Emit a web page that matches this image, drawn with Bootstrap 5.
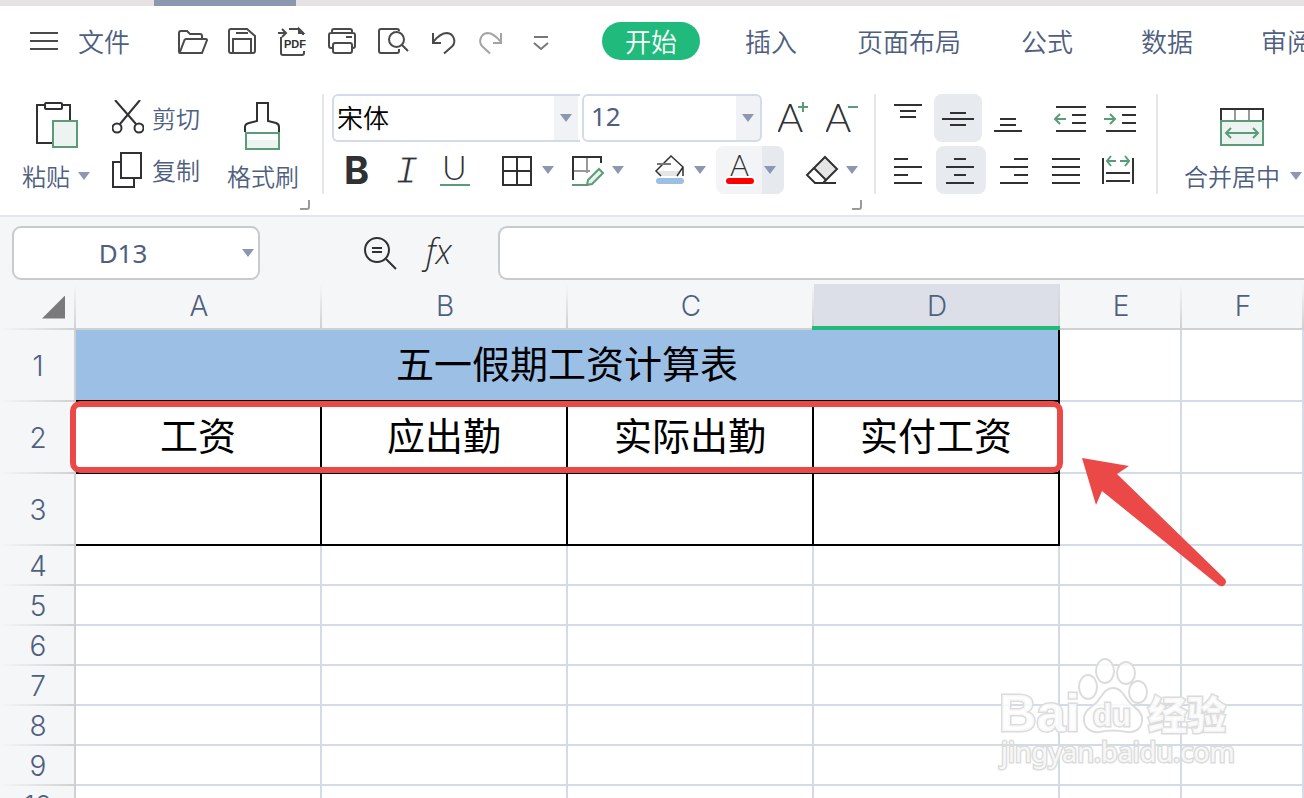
<!DOCTYPE html>
<html lang="zh-CN">
<head>
<meta charset="utf-8">
<meta name="viewport" content="width=device-width, initial-scale=1">
<title>工资计算表</title>
<link href="https://cdn.jsdelivr.net/npm/bootstrap@5.3.0/dist/css/bootstrap.min.css" rel="stylesheet">
<style>
:root{--ink:#4f5f7f;--caret:#8c98b3;--pane:#f5f6f8;--grid:#d3dbe8;--edge:#cfd0d1;--go:#20bb7c;--leaf:#5a9c77;--mark:#eb4848}
body{font-family:"Noto Sans","Noto Sans CJK SC",sans-serif;color:var(--ink);background:#fff}
svg{display:block;flex:none;fill:none;stroke:#303133;stroke-width:2}
svg .leaf{stroke:var(--leaf)}
svg text{stroke:none;fill:#303133}
.cjk{font-family:"Noto Sans CJK SC",sans-serif;font-weight:350}
button.plain{background:none;border:0;padding:0;color:inherit}
.strip{height:6px;background:#e6e2e4;padding-left:154px}
.strip-tab{width:142px;background:#8c98b0}
.menubar{height:72px;padding-left:30px;padding-bottom:2px}
.menubar>*{flex-shrink:0}
.menubar svg{stroke:#4a4a4a}
.menubar .nav-link{font-size:26px;line-height:38px;padding:0 23px;color:var(--ink);white-space:nowrap}
.menubar .nav-link.active{background:var(--go);color:#fff;border-radius:19px;margin-right:8px}
.menubar .nav{gap:14px;margin-left:34px}
.file-btn{font-size:26px;line-height:38px;margin-left:20px;margin-right:38px!important}
button.quick{width:50px;display:flex;justify-content:center;padding-top:2px}
.ribbon{padding:16px 0 21px;border-bottom:2px solid #e5e6ec;font-size:24px}
.group-box{height:100px;position:relative}
.rule{width:2px;height:100px;background:#e5e6e8;flex:none}
.tall{height:100px;display:flex;flex-direction:column;justify-content:space-between}
.tall span,.wide span{line-height:36px;white-space:nowrap}
.wide{height:48px;display:flex;align-items:center;gap:8px}
.caret{width:0;height:0;border:6px solid transparent;border-top:8px solid var(--caret);border-bottom:0;flex:none}
.launch{position:absolute;right:12px;bottom:-16px}
.launch svg{stroke:#9a9a9a}
.combo{height:48px;border:2px solid var(--grid);border-radius:6px;padding:0 26px 4px 7px;font-size:26px;color:var(--ink);background:linear-gradient(#f1f2f5,#f1f2f5) right/24px 100% no-repeat #fff;appearance:none;width:100%}
.combo-face{border-right:0;border-radius:6px 0 0 6px;color:#000;padding:0 26px 3px 3px;background-position:right 2px top}
.combo-wrap{position:relative}
.combo-wrap .caret{position:absolute;right:8px;top:20px;pointer-events:none}
.split{height:48px;width:68px;display:flex;align-items:center}
.split button+button{height:48px;width:22px;padding-left:2px!important}
.split-on{background:#f2f4f6;border-radius:8px;overflow:hidden}
.split-on button+button{background:#e6eaef}
.on{background:#e7eaef!important;border-radius:8px}
.formula{background:var(--pane);padding:9px 0 4px 12px}
.name-box{width:248px;height:54px;border:2px solid #c9cacb;border-radius:9px;background:#fff}
.name-box input{width:218px;border:0;background:none;text-align:center;font-size:26px;color:var(--ink);outline:0}
.formula-input{height:54px;border:2px solid #c9cacb;border-right:0;border-radius:9px 0 0 9px;background:#fff;min-width:0}
.sheet{position:relative;overflow:hidden}
.grid{table-layout:fixed;border-collapse:separate;border-spacing:0;width:100%}
.grid th{background-color:var(--pane);font:350 28px/1 Inter,sans-serif;color:var(--ink);text-align:center;padding:0}
.grid thead th{height:46px;border-bottom:2px solid var(--edge);background-image:linear-gradient(rgba(207,208,209,0),var(--edge));background-size:2px 100%;background-position:right;background-repeat:no-repeat}
.grid thead th.corner{border-bottom:0;background-image:linear-gradient(to right,rgba(207,208,209,0),var(--edge)),linear-gradient(rgba(207,208,209,0),var(--edge));background-size:100% 2px,2px 100%;background-position:bottom,right}
.corner i{display:block;width:23px;height:23px;margin-left:42px;background:#7a7a7a;clip-path:polygon(100% 0,100% 100%,0 100%)}
.grid thead th.picked{background-color:#dcdfe8;position:relative}
.picked::after{content:"";position:absolute;left:-2px;right:0;bottom:-2px;height:4px;background:var(--go)}
.grid tbody th{height:40px;padding-left:2px;border-right:2px solid var(--edge);background-image:linear-gradient(to right,rgba(207,208,209,0),var(--edge));background-size:100% 2px;background-position:bottom;background-repeat:no-repeat}
.grid td{border:solid var(--grid);border-width:0 2px 2px 0;padding:0 0 6px;text-align:center;font:400 38px/1 "Noto Sans CJK SC",sans-serif;color:#000}
.grid tr:not(.roomy) td{padding:0;font-size:16px}
.grid .roomy th{height:72px}
.grid td.boxed{border-color:#000}
.grid td.title{background:#9bbfe5}
.frame{position:absolute;left:70px;top:117px;width:993px;height:72px;border:6px solid var(--mark);border-radius:10px;pointer-events:none}
.arrow{position:absolute;left:1080px;top:172px;stroke:none;fill:var(--mark)}
.brand{position:absolute;left:996px;top:370px;stroke:#dcdcdc;stroke-width:2}
.brand>*{fill:#fff;fill-opacity:.8}
.brand text{stroke:#dcdcdc;stroke-width:3;paint-order:stroke;fill:#fff}
</style>
</head>
<body class="vh-100 overflow-hidden d-flex flex-column">
<div class="strip d-flex flex-shrink-0"><div class="strip-tab"></div></div>

<header class="menubar d-flex align-items-center flex-shrink-0">
  <button class="plain" aria-label="菜单"><svg width="28" height="18"><path d="M0 1h28M0 9h28M0 17h28"/></svg></button>
  <button class="plain file-btn cjk text-nowrap">文件</button>
  <button class="plain quick" aria-label="打开"><svg width="32" height="32"><path d="M2 26V7a2 2 0 0 1 2-2h6l3 3h10a2 2 0 0 1 2 2v3M2 26a1 1 0 0 0 1 1h22l5-13q0-1-1-1H9q-1 0-1.500 1L3 26"/></svg></button>
  <button class="plain quick" aria-label="保存"><svg width="32" height="32"><path d="M4 3h16l8 7v15a2 2 0 0 1-2 2H4a2 2 0 0 1-2-2V5a2 2 0 0 1 2-2zM9 7h12M6 27V13h18v14"/></svg></button>
  <button class="plain quick" aria-label="输出为PDF"><svg width="32" height="32"><path d="M12 3h10l4 4v2M4 11v16a2 2 0 0 0 2 2h19q2 0 2-2v-2M1 7h7M5 3l4 4-4 4"/><path d="M22 3v4h4z"/><text x="7" y="22" font-family="Liberation Sans" font-weight="700" font-size="11">PDF</text></svg></button>
  <button class="plain quick" aria-label="打印"><svg width="32" height="32"><path d="M5 7V5a2 2 0 0 1 2-2h16a2 2 0 0 1 2 2v2M5 22H4a2 2 0 0 1-2-2V9a2 2 0 0 1 2-2h22a2 2 0 0 1 2 2v11a2 2 0 0 1-2 2h-1M19 11h6"/><rect x="6" y="17" width="19" height="10" rx="2"/></svg></button>
  <button class="plain quick" aria-label="打印预览"><svg width="32" height="32"><path d="M22 5V5a2 2 0 0 0-2-2H4a2 2 0 0 0-2 2v20a2 2 0 0 0 2 2h16a2 2 0 0 0 2-2v-2M25 19l6 6"/><circle cx="19.500" cy="13.500" r="7.500"/></svg></button>
  <button class="plain quick" aria-label="撤销"><svg width="32" height="32"><path d="M6 7v10h8M6 16C11 10 15 7 20 7a8 8 0 0 1 5.500 13L17 27.500"/></svg></button>
  <button class="plain quick" aria-label="恢复"><svg width="32" height="32" opacity=".5"><path d="M24 7v10h-8M24 16C19 10 15 7 10.500 7A8 8 0 0 0 5 20l8 7.500"/></svg></button>
  <button class="plain quick" aria-label="更多"><svg width="32" height="32" opacity=".75"><path d="M7 11h14M7 17l7 6 7-6"/></svg></button>
  <nav class="nav flex-nowrap cjk">
    <a class="nav-link active" href="#">开始</a>
    <a class="nav-link" href="#">插入</a>
    <a class="nav-link" href="#">页面布局</a>
    <a class="nav-link me-2" href="#">公式</a>
    <a class="nav-link me-2" href="#">数据</a>
    <a class="nav-link" href="#">审阅</a>
  </nav>
</header>

<section class="ribbon d-flex flex-shrink-0">
  <div class="group-box cjk d-flex" style="padding-left:22px;padding-right:23px">
    <button class="plain cjk tall"><svg width="68" height="56"><path d="M48 26V11H40M23 11h-8v38h16"/><rect x="23" y="9" width="17" height="6" rx="1"/><rect class="leaf" x="31" y="27" width="24" height="26" fill="#edf3f0"/></svg><span class="d-flex align-items-center gap-2">粘贴<i class="caret"></i></span></button>
    <div class="d-flex flex-column gap-1" style="margin:0 27px 0 22px">
      <button class="plain cjk wide"><svg width="32" height="36"><path d="M3 0l21 24M28 0L8 24"/><circle cx="5" cy="28" r="4.500"/><circle cx="27" cy="28" r="4.500"/></svg><span>剪切</span></button>
      <button class="plain cjk wide"><svg width="32" height="36"><path d="M8 10H1v25h21v-8"/><rect x="9" y="1" width="20" height="25"/></svg><span>复制</span></button>
    </div>
    <button class="plain cjk tall"><svg width="72" height="56"><path d="M18 38v-5q0-3 4-4l8-2V9h11v18l8 2q3 1 3 4v5"/><path d="M19 46h33v9H19z" fill="#edf3f0" stroke="none"/><rect class="leaf" x="19" y="39" width="33" height="16"/></svg><span>格式刷</span></button>
    <button class="plain launch" aria-label="剪贴板"><svg width="10" height="10"><path d="M9 0v7q0 2-2 2H0"/></svg></button>
  </div>
  <div class="rule"></div>
  <div class="group-box d-flex flex-column gap-1 ms-2">
    <div class="d-flex">
      <div class="combo-wrap" style="width:248px;margin-right:2px"><select class="combo combo-face cjk" aria-label="字体"><option>宋体</option></select><i class="caret"></i></div>
      <div class="combo-wrap me-3" style="width:180px"><select class="combo" aria-label="字号"><option>12</option></select><i class="caret"></i></div>
      <button class="plain" aria-label="增大字号"><svg width="48" height="48"><text x="-1" y="38" font-family="Lato" font-weight="300" font-size="40">A</text><path class="leaf" d="M20 13h10M25 8v10"/></svg></button>
      <button class="plain" aria-label="减小字号"><svg width="48" height="48"><text x="-1" y="38" font-family="Lato" font-weight="300" font-size="40">A</text><path class="leaf" d="M22 13h10"/></svg></button>
    </div>
    <div class="d-flex">
      <button class="plain" aria-label="加粗"><svg width="50" height="48"><text x="12" y="38" font-family="Inter" font-weight="700" font-size="38">B</text></svg></button>
      <button class="plain" aria-label="倾斜"><svg width="50" height="48"><text x="13" y="37" font-family="Liberation Mono" font-style="italic" font-size="39" style="stroke:#fff;stroke-width:1">I</text></svg></button>
      <button class="plain me-2" aria-label="下划线"><svg width="50" height="48"><text x="10" y="34" font-family="Lato" font-weight="300" font-size="34">U</text><path class="leaf" d="M8 39h30"/></svg></button>
      <div class="split ms-1"><button class="plain" aria-label="边框"><svg width="46" height="48"><rect x="9" y="11" width="28" height="28"/><path d="M23 11v28M9 25h28"/></svg></button><button class="plain" aria-label="边框选项"><i class="caret d-block"></i></button></div>
      <div class="split" style="margin:0 14px 0 2px"><button class="plain" aria-label="绘制边框"><svg width="46" height="48"><path d="M9 34V11h28v6"/><path d="M23 12v15M10 25h16" stroke="#999"/><path class="leaf" d="M8 39h16"/><path class="leaf" d="M35 23l4 4-11 11-5 1 1-5z" fill="#edf3f0"/></svg></button><button class="plain" aria-label="绘制边框选项"><i class="caret d-block"></i></button></div>
      <div class="split" style="margin-right:2px"><button class="plain" aria-label="填充颜色"><svg width="46" height="48"><path d="M12 25h22l-4 5H15z" fill="#e5e5e5" stroke="none"/><path d="M15 30l-5-5 15-15 12 11v9M37 21l-6 9" stroke-width="1.500"/><path d="M11 18h14" stroke="#777"/><rect x="10" y="32" width="28" height="6" rx="3" fill="#9bbfe5" stroke="none"/></svg></button><button class="plain" aria-label="填充颜色选项"><i class="caret d-block"></i></button></div>
      <div class="split split-on"><button class="plain" aria-label="字体颜色"><svg width="46" height="48"><text x="14" y="30" font-family="Lato" font-weight="300" font-size="29">A</text><rect x="9" y="31" width="30" height="8" rx="4" fill="red" stroke="#fff"/></svg></button><button class="plain" aria-label="字体颜色选项"><i class="caret d-block"></i></button></div>
      <div class="split" style="margin:0 8px 0 14px"><button class="plain" aria-label="清除"><svg width="46" height="48"><path d="M27 11l12 12-11 11-12-12z" fill="#e5e5e5"/><path d="M16 22l-7 7 8 8h21M28 34l-3 3"/></svg></button><button class="plain" aria-label="清除选项"><i class="caret d-block"></i></button></div>
    </div>
    <button class="plain launch" aria-label="字体设置"><svg width="10" height="10"><path d="M9 0v7q0 2-2 2H0"/></svg></button>
  </div>
  <div class="rule"></div>
  <div class="group-box d-flex flex-column gap-1 ms-2">
    <div class="d-flex" style="gap:2px">
      <button class="plain" aria-label="顶端对齐"><svg width="48" height="48"><path d="M10 11h28M16 17h16M16 23h16"/></svg></button>
      <button class="plain on" aria-label="垂直居中"><svg width="48" height="48"><path d="M16 19h16M8 25h32M16 31h16"/></svg></button>
      <button class="plain" aria-label="底端对齐"><svg width="48" height="48"><path d="M16 25h16M16 31h16M10 37h28"/></svg></button>
      <button class="plain" aria-label="减少缩进" style="margin-left:12px"><svg width="48" height="48"><path d="M10 13h30M26 21h14M26 29h14M10 37h30"/><path class="leaf" d="M20 25H9M14 20l-5 5 5 5"/></svg></button>
      <button class="plain" aria-label="增加缩进"><svg width="48" height="48"><path d="M10 13h30M26 21h14M26 29h14M10 37h30"/><path class="leaf" d="M8 25h11M14 20l5 5-5 5"/></svg></button>
    </div>
    <div class="d-flex" style="gap:2px">
      <button class="plain" aria-label="左对齐"><svg width="50" height="48"><path d="M10 13h14M10 21h28M10 29h14M10 37h28"/></svg></button>
      <button class="plain on" aria-label="水平居中"><svg width="50" height="48"><path d="M18 13h12M10 21h28M18 29h12M10 37h28"/></svg></button>
      <button class="plain" aria-label="右对齐"><svg width="50" height="48"><path d="M26 13h14M12 21h28M26 29h14M12 37h28"/></svg></button>
      <button class="plain" aria-label="两端对齐"><svg width="50" height="48"><path d="M12 13h28M12 21h28M12 29h28M12 37h28"/></svg></button>
      <button class="plain" aria-label="分散对齐"><svg width="50" height="48"><path d="M11 12v26M41 12v26M14 27h24M14 35h24"/><path class="leaf" d="M24 15h-9M19 10l-4 5 4 5M28 15h9M33 10l4 5-4 5"/></svg></button>
    </div>
  </div>
  <div class="rule" style="margin-left:12px"></div>
  <button class="plain cjk tall" style="margin-left:26px"><svg width="116" height="56"><path d="M37 27V15h42v12"/><path d="M51 16v11M65 16v11" stroke="#999"/><rect class="leaf" x="37" y="27" width="42" height="24" fill="#edf3f0"/><path class="leaf" d="M43 39h30M47 34l-5 5 5 5M69 34l5 5-5 5"/></svg><span class="d-flex align-items-center" style="gap:10px">合并居中<i class="caret"></i></span></button>
</section>

<section class="formula d-flex align-items-center flex-shrink-0">
  <div class="name-box d-flex align-items-center flex-shrink-0"><input value="D13" aria-label="名称框"><button class="plain" aria-label="名称列表" style="margin-left:10px"><i class="caret d-block"></i></button></div>
  <button class="plain" aria-label="查找" style="margin-left:102px"><svg width="36" height="36"><circle cx="15" cy="15" r="12"/><path d="M24 24l10 10M10 13h10M10 17h10"/></svg></button>
  <button class="plain" aria-label="插入函数" style="margin:0 38px 0 22px"><svg width="40" height="52"><text x="6" y="37" font-family="Open Sans" font-weight="350" font-style="italic" font-size="34">fx</text></svg></button>
  <input class="formula-input flex-grow-1" aria-label="编辑栏">
</section>

<main class="sheet flex-grow-1">
  <table class="grid">
    <colgroup><col style="width:76px"><col style="width:246px"><col style="width:246px"><col style="width:246px"><col style="width:246px"><col style="width:122px"><col></colgroup>
    <thead><tr><th class="corner"><i></i></th><th>A</th><th>B</th><th>C</th><th class="picked">D</th><th>E</th><th>F</th></tr></thead>
    <tbody>
      <tr class="roomy"><th>1</th><td class="boxed title" colspan="4">五一假期工资计算表</td><td></td><td></td></tr>
      <tr class="roomy"><th>2</th><td class="boxed">工资</td><td class="boxed">应出勤</td><td class="boxed">实际出勤</td><td class="boxed">实付工资</td><td></td><td></td></tr>
      <tr class="roomy"><th>3</th><td class="boxed"></td><td class="boxed"></td><td class="boxed"></td><td class="boxed"></td><td></td><td></td></tr>
      <tr><th>4</th><td></td><td></td><td></td><td></td><td></td><td></td></tr>
      <tr><th>5</th><td></td><td></td><td></td><td></td><td></td><td></td></tr>
      <tr><th>6</th><td></td><td></td><td></td><td></td><td></td><td></td></tr>
      <tr><th>7</th><td></td><td></td><td></td><td></td><td></td><td></td></tr>
      <tr><th>8</th><td></td><td></td><td></td><td></td><td></td><td></td></tr>
      <tr><th>9</th><td></td><td></td><td></td><td></td><td></td><td></td></tr>
      <tr><th>10</th><td></td><td></td><td></td><td></td><td></td><td></td></tr>
    </tbody>
  </table>
  <div class="frame"></div>
  <svg class="arrow" width="150" height="134"><path d="M2 2l47 8-12 8 108 105a4.500 4.500 0 0 1-6 6.500L22 35l-6 14z"/></svg>
  <svg class="brand" width="250" height="124">
    <ellipse cx="92" cy="33" rx="9" ry="12"/><ellipse cx="109" cy="17" rx="9" ry="12"/><ellipse cx="130" cy="19" rx="9" ry="11"/><ellipse cx="142" cy="38" rx="9" ry="11"/>
    <path d="M117 34c-9 0-11 9-17 15-8 6-13 10-12 18s8 12 15 11q14-3 28 0c8 1 14-3 15-11s-5-12-11-17-8-16-18-16z"/>
    <text x="3" y="77" font-family="Liberation Sans" font-weight="700" font-size="52">Bai</text>
    <text x="97" y="72" font-family="Liberation Sans" font-weight="700" font-size="31">du</text>
    <text x="152" y="75" font-family="Noto Sans CJK SC" font-weight="900" font-size="39">经验</text>
    <text x="5" y="108" font-family="Noto Sans" font-size="27">jingyan.baidu.com</text>
  </svg>
</main>
<script src="https://cdn.jsdelivr.net/npm/bootstrap@5.3.0/dist/js/bootstrap.bundle.min.js"></script>
</body>
</html>
